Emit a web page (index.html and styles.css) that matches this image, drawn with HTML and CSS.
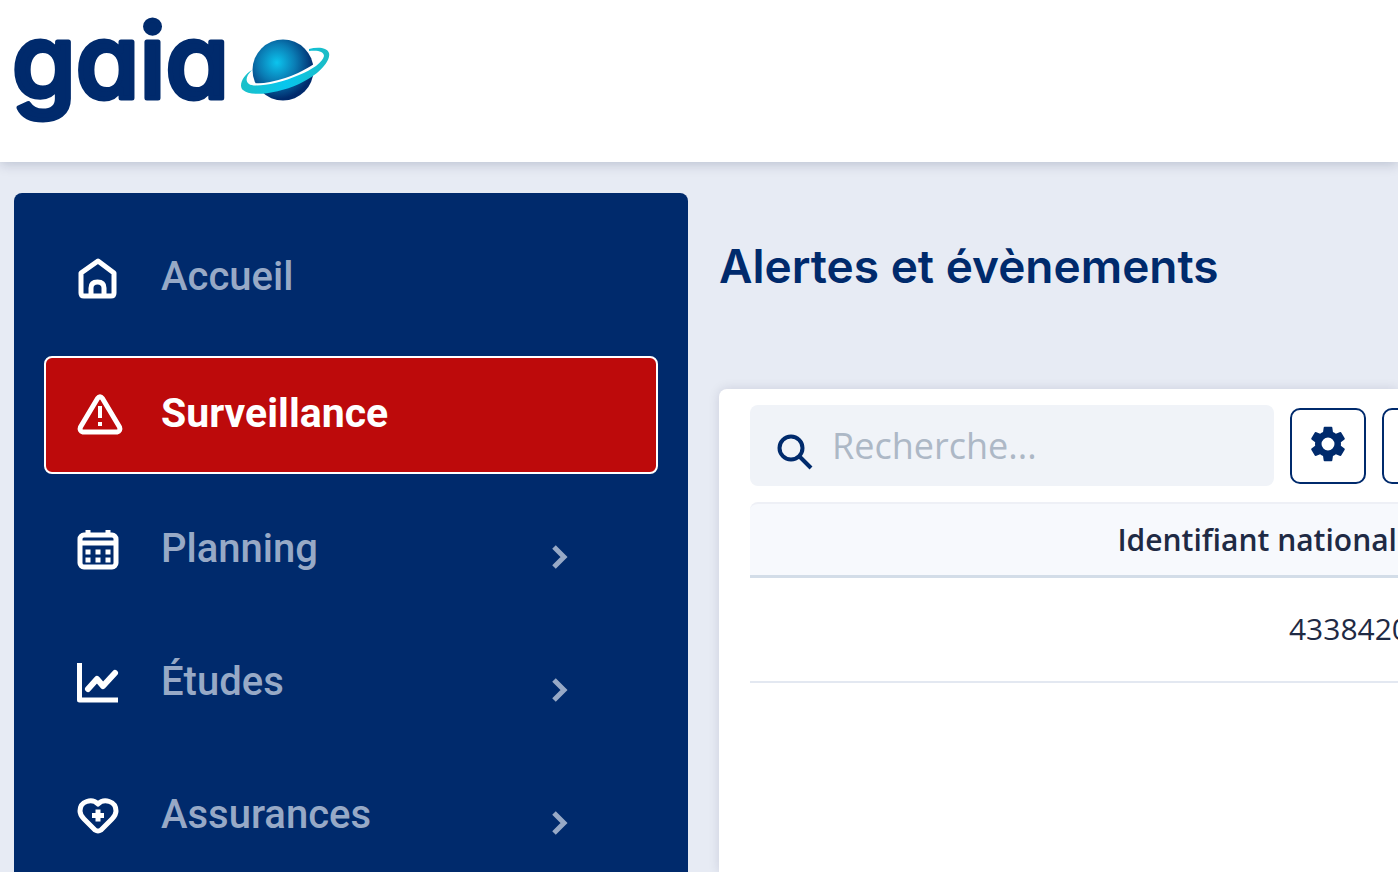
FILE: index.html
```html
<!DOCTYPE html>
<html lang="fr">
<head>
    <meta charset="UTF-8">
    <meta name="viewport" content="width=device-width, initial-scale=1.0">
    <title>Gaia - Alertes et évènements</title>
    <link rel="stylesheet" href="styles.css">
</head>
<body>

<header class="topbar">
    <a href="#" class="brand">
        <svg class="logo" viewBox="0 0 340 140">
            <defs>
                <radialGradient id="globe" cx="0.4" cy="0.38" r="0.6">
                    <stop offset="0" stop-color="#0cc4ee"/>
                    <stop offset="0.5" stop-color="#0a7cb4"/>
                    <stop offset="1" stop-color="#002a6c"/>
                </radialGradient>
                <linearGradient id="ring">
                    <stop offset="0" stop-color="#1cc0c8"/>
                    <stop offset="0.5" stop-color="#06c6ee"/>
                    <stop offset="1" stop-color="#1cbcc4"/>
                </linearGradient>
            </defs>
            <text x="12" y="98" class="logo-text">gaia</text>
            <circle cx="283" cy="70" r="30.500" fill="url(#globe)"/>
            <path d="M255 83Q260 84 270 82Q285 79 298 73Q308 68 314 64L316 68L300 79L258 88Z" fill="#fff"/>
            <path d="M252 70C243 75 238 86 243 90C250 97 277 94 299 84C319 75 331 61 329 53C327 47 317 47 309 49L309 51C317 50 324 51 324 56C323 62 312 70 299 75C279 84 254 88 249 84C245 81 246 76 252 70Z" fill="url(#ring)"/>
        </svg>
    </a>
</header>

<div class="layout">
    <nav class="sidebar">
        <a href="#" class="menu-item">
            <svg class="menu-icon" viewBox="0 0 44 44">
                <path d="M5 16L22 4L38 16V36Q38 39 35 39H8Q5 39 5 36Z"/>
                <path d="M15 39V31Q15 25 21.500 25T28 31V39"/>
            </svg>
            <span class="menu-label">Accueil</span>
        </a>
        <a href="#" class="menu-item active">
            <svg class="menu-icon" viewBox="0 0 44 44">
                <path d="M21.500 5.500Q24 2 26.500 5.500L43.500 34Q45 38 41 39H7Q3 38 4.500 34Z"/>
                <path d="M24 13V25M24 29V33" class="mark"/>
            </svg>
            <span class="menu-label">Surveillance</span>
        </a>
        <a href="#" class="menu-item">
            <svg class="menu-icon" viewBox="0 0 44 44">
                <rect x="4" y="6" width="36" height="32" rx="4"/>
                <path d="M4 14H40M12 1V7M32 1V7"/>
                <path d="M9.500 23H14.500M19.500 23H24.500M29.500 23H34.500M9.500 31H14.500M19.500 31H24.500M29.500 31H34.500"/>
            </svg>
            <span class="menu-label">Planning</span>
            <svg class="chevron" viewBox="0 0 20 28"><path d="M4 4L14 14L4 24"/></svg>
        </a>
        <a href="#" class="menu-item">
            <svg class="menu-icon" viewBox="0 0 44 44">
                <path d="M3.500 1V38H42"/>
                <path d="M12 27L21 17L27 24L39 11" class="thick"/>
            </svg>
            <span class="menu-label">Études</span>
            <svg class="chevron" viewBox="0 0 20 28"><path d="M4 4L14 14L4 24"/></svg>
        </a>
        <a href="#" class="menu-item">
            <svg class="menu-icon" viewBox="0 0 44 44">
                <path d="M22 9C16 3 4 6 4 16C4 20 6 22 8 24L19 35Q22 37 25 35L36 24C38 22 40 20 40 16C40 6 28 3 22 9Z"/>
                <path d="M22 14.500V26.500M16 20.500H28" class="cross"/>
            </svg>
            <span class="menu-label">Assurances</span>
            <svg class="chevron" viewBox="0 0 20 28"><path d="M4 4L14 14L4 24"/></svg>
        </a>
    </nav>

    <main class="content">
        <h1 class="page-title">Alertes et évènements</h1>

        <section class="panel">
            <div class="toolbar">
                <label class="search">
                    <svg class="search-icon" viewBox="0 0 38 38" aria-hidden="true">
                        <circle cx="15" cy="15" r="11.500"/>
                        <path d="M23 23L35 35"/>
                    </svg>
                    <input type="search" class="search-input" placeholder="Recherche..." aria-label="Recherche">
                </label>
                <button type="button" class="tool-button" aria-label="Paramètres">
                    <svg class="gear-icon" viewBox="2 2 20 20" aria-hidden="true">
                        <path d="M19.140 12.940c.04-.3.060-.61.060-.94 0-.32-.02-.64-.07-.94l2.030-1.580a.49.49 0 0 0 .12-.61l-1.920-3.320a.49.49 0 0 0-.59-.22l-2.390.96c-.5-.38-1.030-.7-1.620-.94l-.36-2.540a.48.48 0 0 0-.48-.41h-3.840c-.24 0-.43.17-.47.410l-.36 2.540c-.59.24-1.130.57-1.620.94l-2.390-.96a.48.48 0 0 0-.59.22L2.740 8.870c-.12.21-.08.47.12.610l2.030 1.580c-.05.3-.09.63-.09.94s.02.640.07.940l-2.030 1.580a.49.49 0 0 0-.12.610l1.920 3.320c.12.220.37.290.59.220l2.390-.96c.5.380 1.030.7 1.620.94l.36 2.540c.05.240.24.410.48.410h3.840c.24 0 .44-.17.470-.41l.36-2.540c.59-.24 1.130-.56 1.620-.94l2.390.96c.22.080.47 0 .59-.22l1.920-3.320a.49.49 0 0 0-.12-.61zM12 15.600A3.600 3.600 0 1 1 12 8.400a3.600 3.600 0 0 1 0 7.200z"/>
                    </svg>
                </button>
                <button type="button" class="tool-button" aria-label="Exporter"></button>
            </div>

            <table class="alerts">
                <thead>
                    <tr>
                        <th class="col-state"></th>
                        <th class="col-id">Identifiant national</th>
                    </tr>
                </thead>
                <tbody>
                    <tr>
                        <td></td>
                        <td class="col-id">4338420</td>
                    </tr>
                </tbody>
            </table>
        </section>
    </main>
</div>

</body>
</html>
```
FILE: styles.css
```css
* {
    box-sizing: border-box;
}
body {
    margin: 0;
    height: 100vh;
    display: flex;
    flex-direction: column;
    overflow: hidden;
    background-color: #e7ebf4;
    color: #1f2a44;
    font-family: "Open Sans", "Noto Sans", sans-serif;
}

/* Header */
.topbar {
    flex: none;
    height: 162px;
    background-color: white;
    box-shadow: 0 2px 12px rgba(0, 20, 60, 0.2);
}
.brand {
    display: inline-block;
}
.logo {
    display: block;
    width: 340px;
    height: 140px;
    overflow: visible;
}
.logo-text {
    fill: #002a6c;
    stroke: #002a6c;
    stroke-width: 5px;
    stroke-linejoin: round;
    font-family: Inter, sans-serif;
    font-size: 103px;
    font-weight: 500;
    font-feature-settings: "cv11";
}

/* Layout */
.layout {
    flex: 1;
    display: flex;
    gap: 31px;
    padding: 31px 0 0 14px;
    min-height: 0;
}

/* Side menu */
.sidebar {
    flex: none;
    width: 674px;
    display: flex;
    flex-direction: column;
    gap: 21px;
    padding: 30px;
    background-color: #002a6c;
    border-radius: 8px 8px 0 0;
}
.menu-item {
    flex: none;
    display: flex;
    align-items: center;
    height: 112px;
    padding: 0 88px 0 32px;
    border-radius: 8px;
    color: #97a9c6;
    font-family: Roboto, sans-serif;
    font-size: 40px;
    font-weight: 500;
    text-decoration: none;
}
.menu-item.active {
    height: 118px;
    padding: 0 86px 0 30px;
    border: 2px solid white;
    background-color: #bd0a0b;
    color: white;
    font-size: 41px;
    font-weight: 700;
}
.menu-icon {
    width: 44px;
    height: 44px;
    margin-right: 41px;
    overflow: visible;
    fill: none;
    stroke: white;
    stroke-width: 5;
    stroke-linejoin: round;
}
.menu-icon .mark {
    stroke-width: 4;
}
.menu-icon .thick {
    stroke-width: 6;
    stroke-linecap: round;
}
.menu-icon .cross {
    stroke-width: 5;
}
.menu-label {
    flex: 1;
    padding-bottom: 5px;
}
.chevron {
    width: 20px;
    height: 28px;
    margin-top: 12px;
    fill: none;
    stroke: #97a9c6;
    stroke-width: 5;
}

/* Content */
.content {
    flex: 1;
    display: flex;
    flex-direction: column;
    min-width: 0;
}
.page-title {
    margin: 43px 0 93px;
    color: #002a6c;
    font-family: Inter, sans-serif;
    font-size: 46px;
    font-weight: 600;
    line-height: 60px;
    white-space: nowrap;
}
.panel {
    flex: 1;
    padding: 16px 0 0 31px;
    overflow: hidden;
    background-color: white;
    border-radius: 8px 0 0 0;
    box-shadow: 0 0 12px rgba(0, 20, 60, 0.12);
}
.toolbar {
    display: flex;
    align-items: center;
    gap: 16px;
    margin-bottom: 16px;
}
.search {
    flex: none;
    display: flex;
    align-items: center;
    gap: 18px;
    width: 524px;
    height: 81px;
    padding: 0 26px;
    background-color: #f0f3f8;
    border-radius: 8px;
}
.search-icon {
    flex: none;
    width: 38px;
    height: 38px;
    margin-top: 12px;
    fill: none;
    stroke: #002a6c;
    stroke-width: 4;
}
.search-input {
    flex: 1;
    min-width: 0;
    padding: 0;
    border: none;
    outline: none;
    background: none;
    color: #1f2a44;
    font-family: "Open Sans", "Noto Sans", sans-serif;
    font-size: 36px;
}
.search-input::placeholder {
    color: #adb8c6;
}
.tool-button {
    flex: none;
    display: flex;
    align-items: center;
    justify-content: center;
    width: 76px;
    height: 76px;
    padding: 0 0 4px;
    border: 2px solid #002a6c;
    border-radius: 10px;
    background-color: white;
    cursor: pointer;
}
.gear-icon {
    width: 36px;
    height: 36px;
    fill: #002a6c;
}

/* Table */
.alerts {
    width: 671px;
    table-layout: fixed;
    border-collapse: separate;
    border-spacing: 0;
}
.alerts th {
    height: 76px;
    padding: 0 24px 0 0;
    border-top: 2px solid #eef0f6;
    border-bottom: 3px solid #d3dde8;
    background-color: #f7f9fd;
    font-size: 30px;
    font-weight: 600;
    text-align: left;
    white-space: nowrap;
}
.alerts th:first-child {
    border-top-left-radius: 8px;
}
.alerts td {
    height: 105px;
    padding: 0 12px 2px;
    border-bottom: 2px solid #e3e8f1;
    font-size: 30px;
}
.alerts .col-state {
    width: 340px;
}
.alerts .col-id {
    text-align: right;
}
```
